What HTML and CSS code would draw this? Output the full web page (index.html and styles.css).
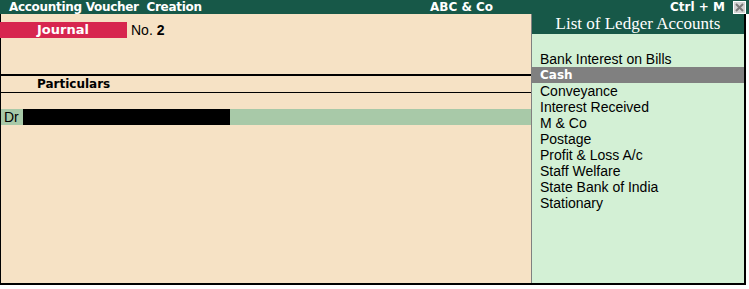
FILE: index.html
```html
<!DOCTYPE html>
<html>
<head>
<meta charset="utf-8">
<link rel="stylesheet" href="styles.css">
</head>
<body>
<div class="titlebar">
  <span class="t-left">Accounting Voucher&nbsp; Creation</span>
  <span class="t-center">ABC &amp; Co</span>
  <span class="t-right">Ctrl + M</span>
  <span class="close"><svg width="11" height="11" viewBox="0 0 11 11"><path d="M2 2 L9 9 M9 2 L2 9" stroke="#7a7a7a" stroke-width="2"/></svg></span>
</div>
<div class="frame">
  <div class="main">
    <div class="vtype">
      <span class="journal">Journal</span>
      <span class="vno">No. <b>2</b></span>
    </div>
    <div class="head">Particulars</div>
    <div class="row">
      <span class="dr">Dr</span>
      <span class="input"></span>
    </div>
  </div>
  <div class="panel">
    <div class="p-head">List of Ledger Accounts</div>
    <ul class="list">
      <li>Bank Interest on Bills</li>
      <li class="sel">Cash</li>
      <li>Conveyance</li>
      <li>Interest Received</li>
      <li>M &amp; Co</li>
      <li>Postage</li>
      <li>Profit &amp; Loss A/c</li>
      <li>Staff Welfare</li>
      <li>State Bank of India</li>
      <li>Stationary</li>
    </ul>
  </div>
</div>
</body>
</html>
```
FILE: styles.css
```css
html, body { margin: 0; padding: 0; background: #ffffff; }
body { width: 749px; height: 289px; overflow: hidden; font-family: "Liberation Sans", Arial, sans-serif; }

.titlebar {
  height: 14px;
  background: #175848;
  color: #ffffff;
  font-family: "DejaVu Sans", Verdana, sans-serif;
  font-weight: bold;
  font-size: 12px;
  line-height: 14px;
  display: flex;
  align-items: center;
  position: relative;
}
.t-left { padding-left: 9px; letter-spacing: -0.3px; }
.t-center { position: absolute; left: 430px; top: 0; }
.t-right { margin-left: auto; margin-right: 8px; }
.close {
  width: 11px; height: 11px;
  background: #d4d4d4;
  border: 1px solid #ffffff;
  display: flex; align-items: center; justify-content: center;
  margin-right: 3px;
}

.frame {
  width: 743px;
  height: 269px;
  border-left: 1px solid #000;
  border-right: 2px solid #000;
  border-bottom: 2px solid #000;
  background: #f6e2c5;
  display: flex;
}
.main { width: 530px; display: flex; flex-direction: column; }

.vtype { margin-top: 8px; display: flex; align-items: center; height: 16px; }
.journal {
  width: 90px; height: 16px; margin-left: -1px;
  padding-left: 37px;
  background: #d7264f; color: #fff;
  font-family: "DejaVu Sans", Verdana, sans-serif;
  font-weight: bold; font-size: 13px; line-height: 16px;
}
.vno { margin-left: 4px; font-size: 14px; color: #000; }
.vno b { font-weight: bold; }

.head {
  margin-top: 36px;
  border-top: 2px solid #000;
  border-bottom: 1px solid #000;
  height: 16px;
  padding-left: 36px;
  font-family: "DejaVu Sans", Verdana, sans-serif;
  font-weight: bold; font-size: 12px; line-height: 16px;
}

.row {
  margin-top: 16px;
  height: 16px;
  background: #a8c9a8;
  display: flex; align-items: center;
}
.dr { width: 22px; padding-left: 3px; box-sizing: border-box; font-size: 14px; line-height: 16px; }
.input { width: 207px; height: 16px; background: #000; }

.panel {
  width: 212px;
  border-left: 1px solid #808080;
  background: #d3f0d5;
}
.p-head {
  height: 20px;
  background: #175848;
  color: #fff;
  font-family: "Liberation Serif", "Times New Roman", serif;
  font-size: 17px;
  line-height: 20px;
  text-align: center;
}
.list { list-style: none; margin: 17px 0 0 0; padding: 0; }
.list li { height: 16px; line-height: 16px; font-size: 14px; padding-left: 8px; color: #000; }
.list li.sel {
  background: #808080; color: #fff;
  font-family: "DejaVu Sans", Verdana, sans-serif;
  font-weight: bold; font-size: 12px;
}
```
